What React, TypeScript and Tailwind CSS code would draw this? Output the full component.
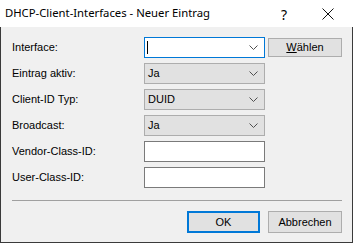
import React from 'react';

const Chevron = () => (
    <svg width="9" height="6" viewBox="0 0 9 6" className="shrink-0">
        <path d="M0.5 0.5 L4.5 4.5 L8.5 0.5" fill="none" stroke="#505050" strokeWidth="1" />
    </svg>
);

const Combo = ({ value, focused }: { value?: string; focused?: boolean }) => (
    <div
        className={`w-[121px] h-[21px] flex items-center justify-between pl-[3px] pr-[6px] border ${
            focused ? 'bg-white border-[#0078d7]' : 'bg-[#e1e1e1] border-[#adadad]'
        }`}
    >
        {focused ? <div className="w-[1px] h-[13px] bg-black ml-[-1px]" /> : <span>{value}</span>}
        <Chevron />
    </div>
);

const TextBox = () => <div className="w-[121px] h-[21px] bg-white border border-[#7a7a7a]" />;

const Row = ({ label, children }: { label: string; children: React.ReactNode }) => (
    <div className="flex items-center h-[21px]">
        <div className="w-[132px]">{label}</div>
        {children}
    </div>
);

export default function App() {
    return (
        <div className="w-[353px] h-[243px] flex flex-col bg-[#f0f0f0] text-black" style={{ fontFamily: '"Liberation Sans", Arial, sans-serif' }}>
            <div className="h-[27px] shrink-0 bg-white flex items-center pl-[5px] relative">
                <span className="text-[11.3px]" style={{ fontFamily: '"Noto Sans", "Liberation Sans", sans-serif' }}>
                    DHCP-Client-Interfaces - Neuer Eintrag
                </span>
                <span className="absolute left-[281px] top-[4px] text-[14px]" style={{ fontFamily: '"Noto Sans", sans-serif' }}>?</span>
                <svg width="12" height="12" viewBox="0 0 12 12" className="absolute left-[322px] top-[8px]">
                    <path d="M0.5 0.5 L11.5 11.5 M11.5 0.5 L0.5 11.5" stroke="#111" strokeWidth="1" />
                </svg>
            </div>
            <div className="flex-1 flex flex-col border-l border-r border-b border-[#3a3a3a] pl-[11px] pr-[10px] pt-[10px] text-[11px]">
                <div className="flex flex-col gap-[5px]">
                    <Row label="Interface:">
                        <Combo focused />
                        <div className="ml-[3px] w-[74px] h-[19px] bg-[#e1e1e1] border border-[#adadad] flex items-center justify-center">
                            <span><span className="underline">W</span>ählen</span>
                        </div>
                    </Row>
                    <Row label="Eintrag aktiv:">
                        <Combo value="Ja" />
                    </Row>
                    <Row label="Client-ID Typ:">
                        <Combo value="DUID" />
                    </Row>
                    <Row label="Broadcast:">
                        <Combo value="Ja" />
                    </Row>
                    <Row label="Vendor-Class-ID:">
                        <TextBox />
                    </Row>
                    <Row label="User-Class-ID:">
                        <TextBox />
                    </Row>
                </div>
                <div className="mt-[12px] h-[1px] w-[330px] bg-[#a0a0a0]" />
                <div className="mt-[10px] flex justify-end gap-[8px]">
                    <div className="w-[73px] h-[22px] bg-[#e1e1e1] border-2 border-[#0078d7] flex items-center justify-center">OK</div>
                    <div className="w-[74px] h-[22px] bg-[#e1e1e1] border border-[#adadad] flex items-center justify-center">Abbrechen</div>
                </div>
            </div>
        </div>
    );
}
